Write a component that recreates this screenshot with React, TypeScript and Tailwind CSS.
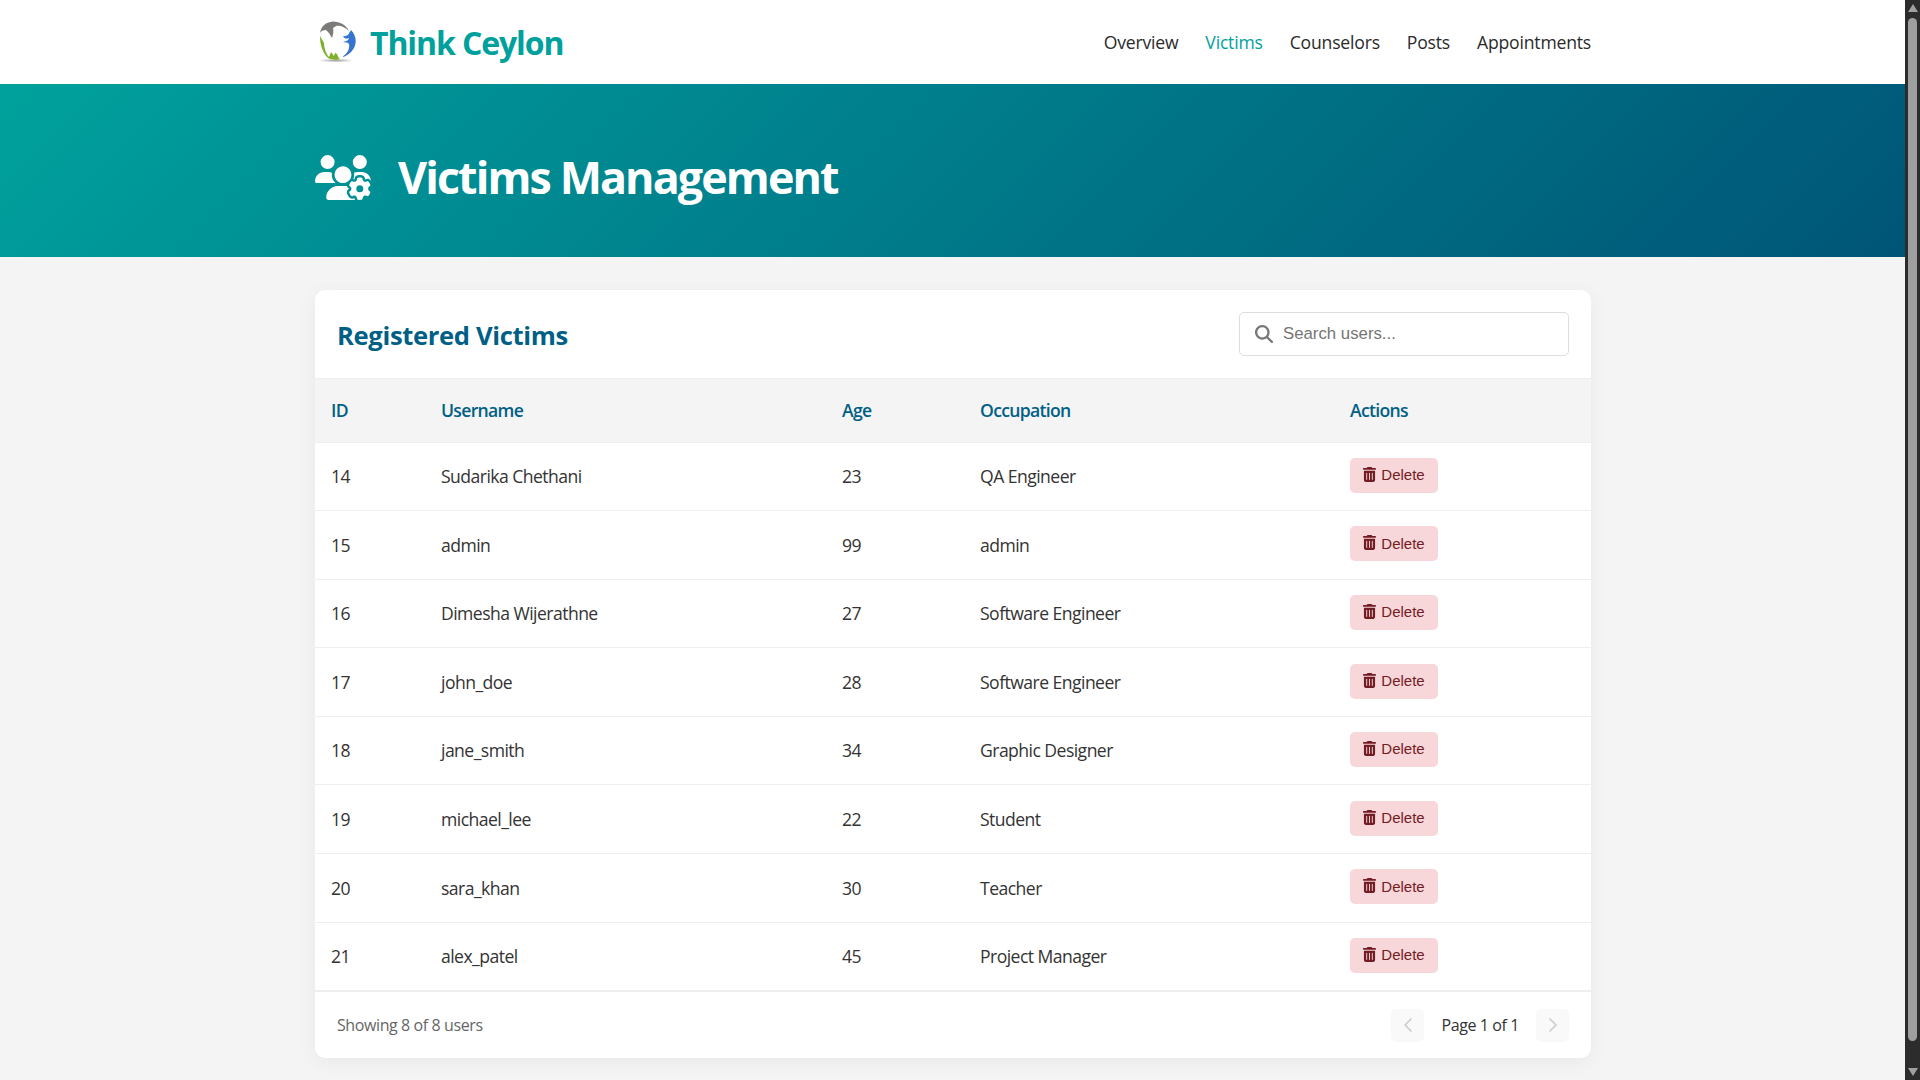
import { ChevronLeft, ChevronRight } from 'lucide-react';
import { FaMagnifyingGlass, FaTrashCan, FaUsersGear } from 'react-icons/fa6';

const navLinks = ['Overview', 'Victims', 'Counselors', 'Posts', 'Appointments'];

const victims = [
  { id: 14, username: 'Sudarika Chethani', age: 23, occupation: 'QA Engineer' },
  { id: 15, username: 'admin', age: 99, occupation: 'admin' },
  { id: 16, username: 'Dimesha Wijerathne', age: 27, occupation: 'Software Engineer' },
  { id: 17, username: 'john_doe', age: 28, occupation: 'Software Engineer' },
  { id: 18, username: 'jane_smith', age: 34, occupation: 'Graphic Designer' },
  { id: 19, username: 'michael_lee', age: 22, occupation: 'Student' },
  { id: 20, username: 'sara_khan', age: 30, occupation: 'Teacher' },
  { id: 21, username: 'alex_patel', age: 45, occupation: 'Project Manager' },
];

function Logo() {
  return (
    <svg viewBox="14 12 37 42" className="w-[37px] h-[42px] shrink-0">
      <defs>
        <radialGradient id="logo-shadow">
          <stop offset="0" stopColor="#777" stopOpacity="0.7" />
          <stop offset="1" stopColor="#777" stopOpacity="0" />
        </radialGradient>
      </defs>
      <ellipse cx="31" cy="51.5" rx="18" ry="2" fill="url(#logo-shadow)" />
      {/* grey figure */}
      <path d="M15 24 C16 18 20 13 28 12.5 C35 12.5 41 16 44 22 C40 18 35 16 31 17 L28 19 C29 22 28 26 27 29 L24 24 L21 21 C18 21 16 22 15 24 Z" fill="#7b7b78" />
      {/* blue figure */}
      <path d="M46 21 C51 26 52 33 49 39 C46 44 42 47 37 48 C42 45 45 40 44 35 C43 33 41 34 38 33 C42 32 44 31 44 29 C42 30 39 30 38 27 C41 28 44 26 46 21 Z" fill="#3574cf" />
      <circle cx="46" cy="24" r="1.6" fill="#3574cf" />
      {/* green figure */}
      <path d="M15 27 C15 35 17 43 23 49 C27 51 32 51 35 50 C32 48 33 44 30 44 L29 47 L26 43 L24 48 C21 45 19 38 19 34 L15 27 Z" fill="#7fb02c" />
    </svg>
  );
}

export default function App() {
  return (
    <div className="flex h-screen overflow-hidden bg-[#f4f4f4] font-['Open_Sans',sans-serif] text-[#333]">
      <div className="flex-1 min-w-0">
        <header className="h-[84px] bg-white">
          <div className="w-[1276px] ml-[315px] h-full flex items-center justify-between">
            <div className="flex items-center gap-[14px] pl-1">
              <Logo />
              <span className="text-[32px] leading-[48px] mt-[2px] font-bold tracking-[-1.1px] text-[#00a19d]">Think Ceylon</span>
            </div>
            <nav className="flex items-center gap-[27px]">
              {navLinks.map((link) => (
                <a key={link} className={`text-[17.6px] font-medium tracking-[-0.2px] ${link === 'Victims' ? 'text-[#00a19d]' : 'text-[#2a2a2a]'}`}>
                  {link}
                </a>
              ))}
            </nav>
          </div>
        </header>

        <section className="h-[173px] bg-[linear-gradient(135deg,#00a19d,#005577)]">
          <div className="w-[1276px] ml-[315px] h-full flex items-center gap-[27px] pt-[13px]">
            <FaUsersGear className="w-[56px] h-[45px] text-white" />
            <h1 className="text-[44.8px] font-bold tracking-[-1.9px] text-white">Victims Management</h1>
          </div>
        </section>

        <main className="pt-[33px]">
          <div className="w-[1276px] ml-[315px] bg-white rounded-[10px] shadow-[0_4px_20px_rgba(0,0,0,0.05)] overflow-hidden">
            <div className="h-[89px] px-[22px] flex items-center justify-between border-b border-[#eee]">
              <h2 className="text-[25.6px] mt-[4px] font-bold tracking-[-0.35px] text-[#005f85]">Registered Victims</h2>
              <div className="relative">
                <FaMagnifyingGlass className="absolute left-[16px] top-[13px] w-[18px] h-[18px] text-[#777]" />
                <input
                  placeholder="Search users..."
                  className="w-[330px] h-[44px] pl-[43px] pr-3 rounded-[5px] border border-[#ddd] font-['Liberation_Sans',sans-serif] text-[16.8px] placeholder:text-[#757575]"
                />
              </div>
            </div>

            <table className="w-full table-fixed border-collapse text-left">
              <colgroup>
                <col className="w-[110px]" />
                <col className="w-[401px]" />
                <col className="w-[138px]" />
                <col className="w-[370px]" />
                <col />
              </colgroup>
              <thead>
                <tr className="h-[63px] bg-[#f4f4f4] border-b border-[#eee] text-[17.6px] font-semibold tracking-[-0.7px] text-[#005f85]">
                  <th className="pl-4 font-semibold">ID</th>
                  <th className="pl-4 font-semibold">Username</th>
                  <th className="pl-4 font-semibold">Age</th>
                  <th className="pl-4 font-semibold">Occupation</th>
                  <th className="pl-4 font-semibold">Actions</th>
                </tr>
              </thead>
              <tbody>
                {victims.map((v) => (
                  <tr key={v.id} className="h-[68.6px] border-b border-[#eee] text-[17.6px] tracking-[-0.55px]">
                    <td className="pl-4">{v.id}</td>
                    <td className="pl-4">{v.username}</td>
                    <td className="pl-4">{v.age}</td>
                    <td className="pl-4">{v.occupation}</td>
                    <td className="pl-4">
                      <button className="w-[88px] h-[35px] mb-[2px] flex items-center justify-center gap-[5px] rounded-[5px] bg-[#f8d7da] text-[#721c24] font-['Liberation_Sans',sans-serif] text-[15px] tracking-normal">
                        <FaTrashCan className="w-[13px] h-[15px] mb-[2px]" />
                        Delete
                      </button>
                    </td>
                  </tr>
                ))}
              </tbody>
            </table>

            <div className="h-[67px] px-[22px] flex items-center justify-between border-t border-[#eee]">
              <span className="text-[16px] tracking-[-0.4px] text-[#666]">Showing 8 of 8 users</span>
              <div className="flex items-center gap-[17px]">
                <button className="w-[33px] h-[33px] flex items-center justify-center rounded-[5px] bg-[#f9f9f9] text-[#ccc]">
                  <ChevronLeft size={24} strokeWidth={1.7} />
                </button>
                <span className="text-[16px] tracking-[-0.4px]">Page 1 of 1</span>
                <button className="w-[33px] h-[33px] flex items-center justify-center rounded-[5px] bg-[#f9f9f9] text-[#ccc]">
                  <ChevronRight size={24} strokeWidth={1.7} />
                </button>
              </div>
            </div>
          </div>
        </main>
      </div>

      {/* window scrollbar */}
      <div className="w-[15px] shrink-0 bg-[#2c2c2c] flex flex-col items-center">
        <svg viewBox="0 0 10 8" className="w-[10px] h-[8px] mt-[4px] fill-[#a0a0a0]">
          <path d="M5 0 L10 8 H0 Z" />
        </svg>
        <div className="w-[9px] h-[1023px] mt-[6px] rounded-full bg-[#9f9f9f]" />
        <svg viewBox="0 0 10 8" className="w-[10px] h-[8px] mt-auto mb-[4px] fill-[#a0a0a0]">
          <path d="M0 0 H10 L5 8 Z" />
        </svg>
      </div>
    </div>
  );
}
